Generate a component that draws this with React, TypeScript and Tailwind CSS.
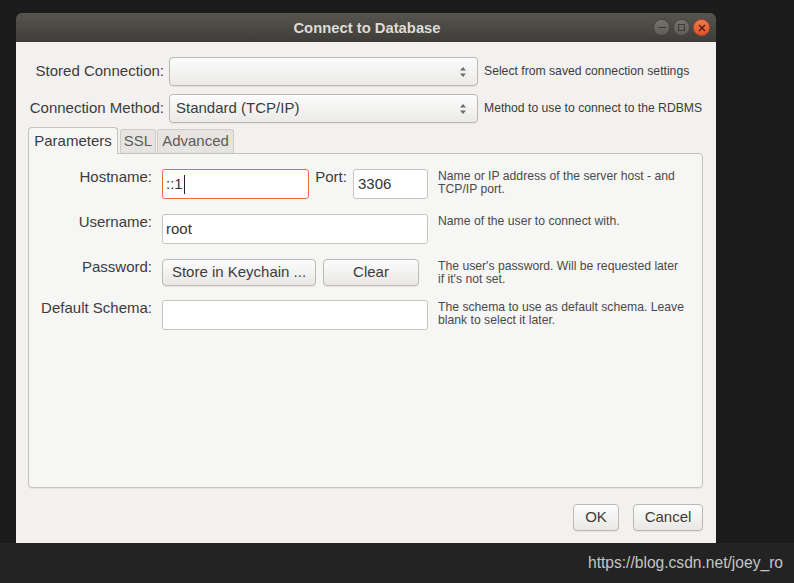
import React from "react";

const font = { fontFamily: '"Liberation Sans", Arial, sans-serif' };

function Spinner() {
  return (
    <svg width="8" height="14" viewBox="0 0 8 14" className="shrink-0">
      <path d="M4 2 L7 5.5 L1 5.5 Z" fill="#6b6b6b" />
      <path d="M4 12 L7 8.5 L1 8.5 Z" fill="#6b6b6b" />
    </svg>
  );
}

function Combo({ value }: { value?: string }) {
  return (
    <div className="w-[309px] h-[29px] rounded-[4px] border border-[#bdb8b3] bg-gradient-to-b from-[#fcfcfc] to-[#ebeae8] flex items-center justify-between pl-[6px] pr-[10px] text-[15px] text-[#3c3c3c] shadow-[0_1px_0_rgba(0,0,0,0.06)]">
      <span>{value}</span>
      <Spinner />
    </div>
  );
}

function Btn({ label, className }: { label: string; className: string }) {
  return (
    <div
      className={`h-[27px] rounded-[4px] border border-[#bdb8b3] bg-gradient-to-b from-[#fcfcfc] to-[#e9e8e6] flex items-center justify-center text-[15px] text-[#3c3c3c] shadow-[0_1px_0_rgba(0,0,0,0.06)] ${className}`}
    >
      {label}
    </div>
  );
}

function Hint({ children }: { children: React.ReactNode }) {
  return <div className="text-[12.2px] leading-[13px] text-[#4a4a4a] pt-[1px]">{children}</div>;
}

function Label({ children }: { children: React.ReactNode }) {
  return <div className="text-[15px] text-[#3c3c3c] text-right leading-[16px]">{children}</div>;
}

function WinButton({ close, children }: { close?: boolean; children: React.ReactNode }) {
  return (
    <div
      className={`w-[17px] h-[17px] rounded-full flex items-center justify-center ${
        close
          ? "bg-gradient-to-b from-[#f27a4e] to-[#e0522a] border border-[#b9472a]"
          : "bg-gradient-to-b from-[#76746f] to-[#5d5b56] border border-[#45443f]"
      }`}
    >
      {children}
    </div>
  );
}

export default function App() {
  return (
    <div className="w-[794px] h-[583px] flex flex-col bg-[#1c1c1c] overflow-hidden" style={font}>
      <div className="h-[543px] pt-[13px] pl-[16px] shrink-0">
        <div className="w-[700px] h-[530px] flex flex-col">
          {/* Title bar */}
          <div className="h-[29px] rounded-t-[6px] bg-gradient-to-b from-[#56554f] to-[#3e3d39] flex items-center relative">
            <div className="flex-1 text-center text-[14.8px] font-bold text-[#dfdbd2] pl-[2px] pt-[1px]">
              Connect to Database
            </div>
            <div className="absolute right-[6px] top-[6px] flex gap-[3px]">
              <WinButton>
                <div className="w-[8px] h-[1.5px] bg-[#3a3935]" />
              </WinButton>
              <WinButton>
                <div className="w-[7px] h-[7px] border border-[#3a3935]" />
              </WinButton>
              <WinButton close>
                <svg width="8" height="8" viewBox="0 0 8 8">
                  <path d="M1 1 L7 7 M7 1 L1 7" stroke="#4a1e10" strokeWidth="1.3" />
                </svg>
              </WinButton>
            </div>
          </div>

          {/* Body */}
          <div className="flex-1 bg-[#f2f1f0] flex flex-col pl-[12px] pr-[13px] pt-[15px]">
            <div className="flex items-center">
              <div className="w-[136px] text-right text-[15px] text-[#3c3c3c]">Stored Connection:</div>
              <div className="ml-[5px]">
                <Combo />
              </div>
              <div className="ml-[6px] text-[12.2px] text-[#3c3c3c]">Select from saved connection settings</div>
            </div>
            <div className="flex items-center mt-[8px]">
              <div className="w-[136px] text-right text-[15px] text-[#3c3c3c]">Connection Method:</div>
              <div className="ml-[5px]">
                <Combo value="Standard (TCP/IP)" />
              </div>
              <div className="ml-[6px] text-[12.2px] text-[#3c3c3c]">Method to use to connect to the RDBMS</div>
            </div>

            {/* Tabs */}
            <div className="flex items-end mt-[3px] h-[27px] relative z-10">
              <div className="w-[90px] h-[27px] border border-b-0 border-[#c6c2bd] rounded-t-[4px] bg-[#f6f6f5] flex items-center justify-center text-[15px] text-[#3c3c3c] translate-y-[1px]">
                Parameters
              </div>
              <div className="ml-[2px] w-[36px] h-[24px] border border-b-0 border-[#cfcbc6] rounded-t-[3px] bg-[#e6e4e1] flex items-center justify-center text-[15px] text-[#5c5c5c]">
                SSL
              </div>
              <div className="ml-[1px] w-[77px] h-[24px] border border-b-0 border-[#cfcbc6] rounded-t-[3px] bg-[#e6e4e1] flex items-center justify-center text-[15px] text-[#5c5c5c]">
                Advanced
              </div>
            </div>

            {/* Panel */}
            <div className="h-[335px] border border-[#c6c2bd] rounded-b-[4px] rounded-tr-[4px] bg-[#f6f6f5] pt-[15px] shadow-[0_1px_0_rgba(0,0,0,0.05)]">
              <div className="grid grid-cols-[123px_266px_1fr] gap-x-[10px] gap-y-[15px] items-start">
                <Label>Hostname:</Label>
                <div className="flex items-start">
                  <div className="w-[147px] h-[30px] rounded-[3px] border border-[#ec6c3d] bg-white flex items-center pl-[3px] text-[15px] text-[#333]">
                    ::1<span className="w-[1px] h-[19px] bg-[#222] ml-[1px]" />
                  </div>
                  <div className="flex-1 text-center text-[15px] leading-[16px] text-[#3c3c3c]">Port:</div>
                  <div className="w-[75px] h-[30px] rounded-[3px] border border-[#c9c4bf] bg-white flex items-center pl-[4px] text-[15px] text-[#333]">
                    3306
                  </div>
                </div>
                <Hint>
                  Name or IP address of the server host - and
                  <br />
                  TCP/IP port.
                </Hint>

                <Label>Username:</Label>
                <div className="h-[30px] rounded-[3px] border border-[#c9c4bf] bg-white flex items-center pl-[3px] text-[15px] text-[#333]">
                  root
                </div>
                <Hint>Name of the user to connect with.</Hint>

                <Label>Password:</Label>
                <div className="flex">
                  <Btn label="Store in Keychain ..." className="w-[154px]" />
                  <Btn label="Clear" className="w-[96px] ml-[7px]" />
                </div>
                <Hint>
                  The user's password. Will be requested later
                  <br />
                  if it's not set.
                </Hint>

                <div className="-mt-[1px]">
                  <Label>Default Schema:</Label>
                </div>
                <div className="h-[30px] -mt-[1px] rounded-[3px] border border-[#c9c4bf] bg-white" />
                <div className="-mt-[1px]">
                  <Hint>
                    The schema to use as default schema. Leave
                    <br />
                    blank to select it later.
                  </Hint>
                </div>
              </div>
            </div>

            {/* Footer buttons */}
            <div className="flex justify-end mt-[16px]">
              <Btn label="OK" className="w-[46px]" />
              <Btn label="Cancel" className="w-[70px] ml-[14px]" />
            </div>
          </div>
        </div>
      </div>
      <div className="flex-1 bg-[#232323] flex items-center justify-end pr-[11px]">
        <span className="text-[15.6px] text-[#c4c4c4]">https://blog.csdn.net/joey_ro</span>
      </div>
    </div>
  );
}
